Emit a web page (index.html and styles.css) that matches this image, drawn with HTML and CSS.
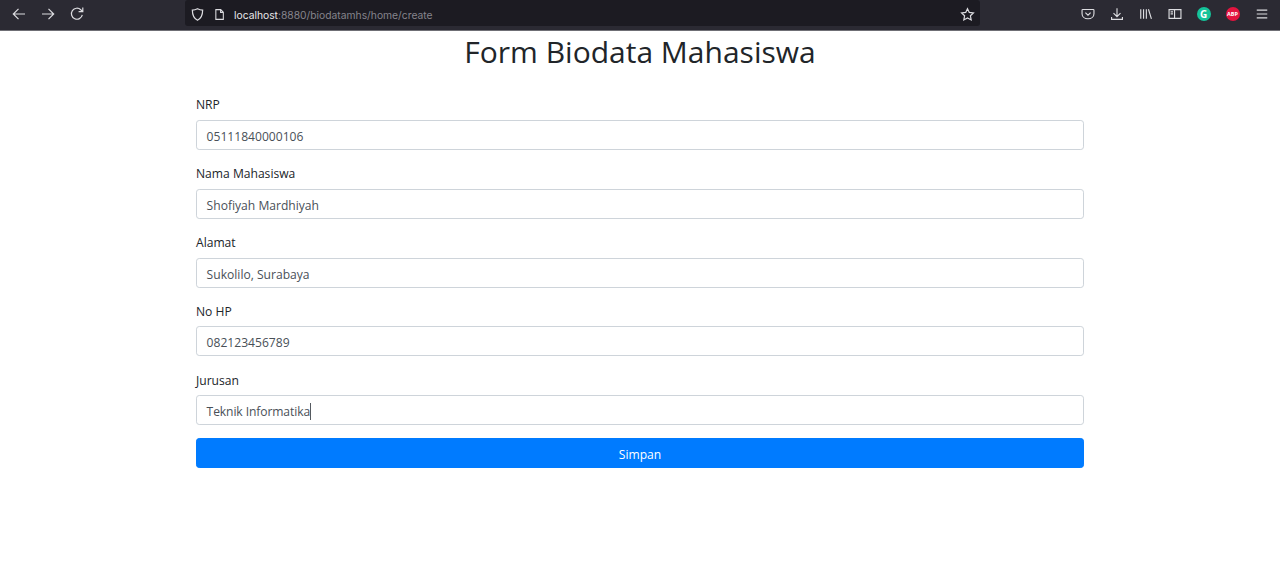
FILE: index.html
```html
<!DOCTYPE html>
<html lang="id">
<head>
<meta charset="utf-8">
<title>Form Biodata Mahasiswa</title>
<link rel="stylesheet" href="styles.css">
</head>
<body>
<header class="toolbar">
  <nav class="nav-buttons">
    <svg class="icon nav-icon" viewBox="0 0 16 16"><path d="M14 8H2.500M7.500 2.800 2.300 8l5.200 5.200"/></svg>
    <svg class="icon nav-icon" viewBox="0 0 16 16"><path d="M2 8h11.500M8.500 2.800 13.700 8l-5.200 5.200"/></svg>
    <svg class="icon nav-icon" viewBox="0 0 16 16"><path d="M13.300 8.900A5.500 5.500 0 1 1 11.800 3.800L13.600 5.500M13.800 1.500v4.200H9.600"/></svg>
  </nav>
  <div class="urlbar">
    <svg class="icon url-icon" viewBox="0 0 16 16"><path d="M8 1.800c2 1.100 3.800 1.500 5.500 1.500 0 5-1.500 9-5.500 10.900C4 12.300 2.500 8.300 2.500 3.300 4.200 3.300 6 2.900 8 1.800z"/></svg>
    <svg class="icon url-icon page" viewBox="0 0 16 16"><path d="M3.500 2h6l3.200 3.200V14h-9.200zM9.300 2v3.400h3.400"/></svg>
    <span class="url"><span class="host">localhost</span>:8880/biodatamhs/home/create</span>
    <svg class="icon star" viewBox="0 0 16 16"><path d="m8 1.800 1.900 4 4.400.6-3.200 3 .8 4.400L8 11.700l-3.900 2.100.8-4.400-3.200-3 4.400-.6z"/></svg>
  </div>
  <div class="tools">
    <svg class="icon" viewBox="0 0 16 16"><path d="M2 2.800h12c.5 0 .8.400.8.800v4c0 3.400-3 5.800-6.800 5.800S1.200 11 1.200 7.600v-4c0-.4.300-.8.800-.8zM5 6.500 8 9.300l3-2.800"/></svg>
    <svg class="icon" viewBox="0 0 16 16"><path d="M8 1.500v9M4 7l4 4 4-4M1.800 11.500v2.700h12.400v-2.700"/></svg>
    <svg class="icon" viewBox="0 0 16 16"><path d="M2 2.500v11M5.200 2.500v11M8.400 2.500v11M10.800 2.600l3.400 10.900"/></svg>
    <svg class="icon" viewBox="0 0 16 16"><path d="M1.200 3h13.600v10H1.200zM7.500 3v10M3 5.500h2.700M3 7.800h2.700"/></svg>
    <span class="badge grammarly">G</span>
    <span class="badge abp">ABP</span>
    <svg class="icon" viewBox="0 0 16 16"><path d="M2 3.500h12M2 8h12M2 12.500h12"/></svg>
  </div>
</header>
<main class="page-content">
  <h1 class="title">Form Biodata Mahasiswa</h1>
  <form class="form">
    <div class="group">
      <label class="label">NRP</label>
      <div class="input">05111840000106</div>
    </div>
    <div class="group">
      <label class="label">Nama Mahasiswa</label>
      <div class="input">Shofiyah Mardhiyah</div>
    </div>
    <div class="group">
      <label class="label">Alamat</label>
      <div class="input">Sukolilo, Surabaya</div>
    </div>
    <div class="group">
      <label class="label">No HP</label>
      <div class="input">082123456789</div>
    </div>
    <div class="group">
      <label class="label">Jurusan</label>
      <div class="input"><span class="caret">Teknik Informatika</span></div>
    </div>
    <button class="submit" type="button">Simpan</button>
  </form>
</main>
</body>
</html>
```
FILE: styles.css
```css
* { box-sizing: border-box; }
html, body { height: 100%; }
body {
  margin: 0;
  background: #fff;
  color: #212529;
  font-family: "Open Sans", "Noto Sans", sans-serif;
  font-size: 12.100px;
  overflow: hidden;
}
.toolbar {
  display: flex;
  align-items: center;
  height: 31px;
  padding-bottom: 2px;
  background: #2b2a33;
  border-bottom: 1px solid #6f6f75;
  color: #e4e4e8;
}
.icon {
  width: 14px;
  height: 14px;
  flex: none;
  fill: none;
  stroke: #dcdce0;
  stroke-width: 1.300;
}
.nav-icon { width: 16px; height: 16px; stroke-width: 1.200; }
.nav-buttons {
  display: flex;
  gap: 13px;
  width: 185px;
  padding-left: 11px;
}
.urlbar {
  display: flex;
  align-items: center;
  align-self: flex-start;
  width: 795px;
  height: 26px;
  padding: 2px 5px 0 5px;
  background: #1c1b22;
  border-radius: 3px;
}
.url-icon { width: 15px; height: 15px; margin-right: 8px; }
.page { width: 13px; height: 13px; margin-right: 8px; }
.url {
  flex: 1;
  padding-top: 1px;
  font-family: "Inter", "Open Sans", sans-serif;
  font-size: 10.300px;
  color: #85848c;
}
.host { color: #e8e8ea; }
.star { width: 15px; height: 15px; margin-right: 0; }
.tools {
  display: flex;
  align-items: center;
  gap: 15px;
  margin-left: 100.500px;
}
.badge {
  display: flex;
  align-items: center;
  justify-content: center;
  width: 14px;
  height: 14px;
  flex: none;
  border-radius: 50%;
  color: #fff;
  font-weight: 700;
}
.grammarly { background: #15c39a; font-size: 10px; }
.abp { background: #e3143f; font-size: 5.500px; }
.page-content {
  width: 888px;
  margin: 0 auto;
}
.title {
  margin: 2px 0 23px;
  font-size: 30px;
  font-weight: 400;
  line-height: 38.400px;
  text-align: center;
}
.form { display: flex; flex-direction: column; }
.group { display: flex; flex-direction: column; margin-bottom: 13.200px; }
.label { padding-top: 1px; line-height: 19.200px; margin-bottom: 5.400px; }
.input {
  height: 30px;
  padding: 2px 9.600px 0;
  border: 1px solid #ced4da;
  border-radius: 3.200px;
  color: #495057;
  line-height: 28px;
}
.caret { border-right: 1px solid #555a60; letter-spacing: -0.100px; }
.submit {
  height: 30px;
  padding-top: 4px;
  border: 1px solid #007bff;
  border-radius: 3.200px;
  background: #007bff;
  color: #fff;
  font: inherit;
}
```
